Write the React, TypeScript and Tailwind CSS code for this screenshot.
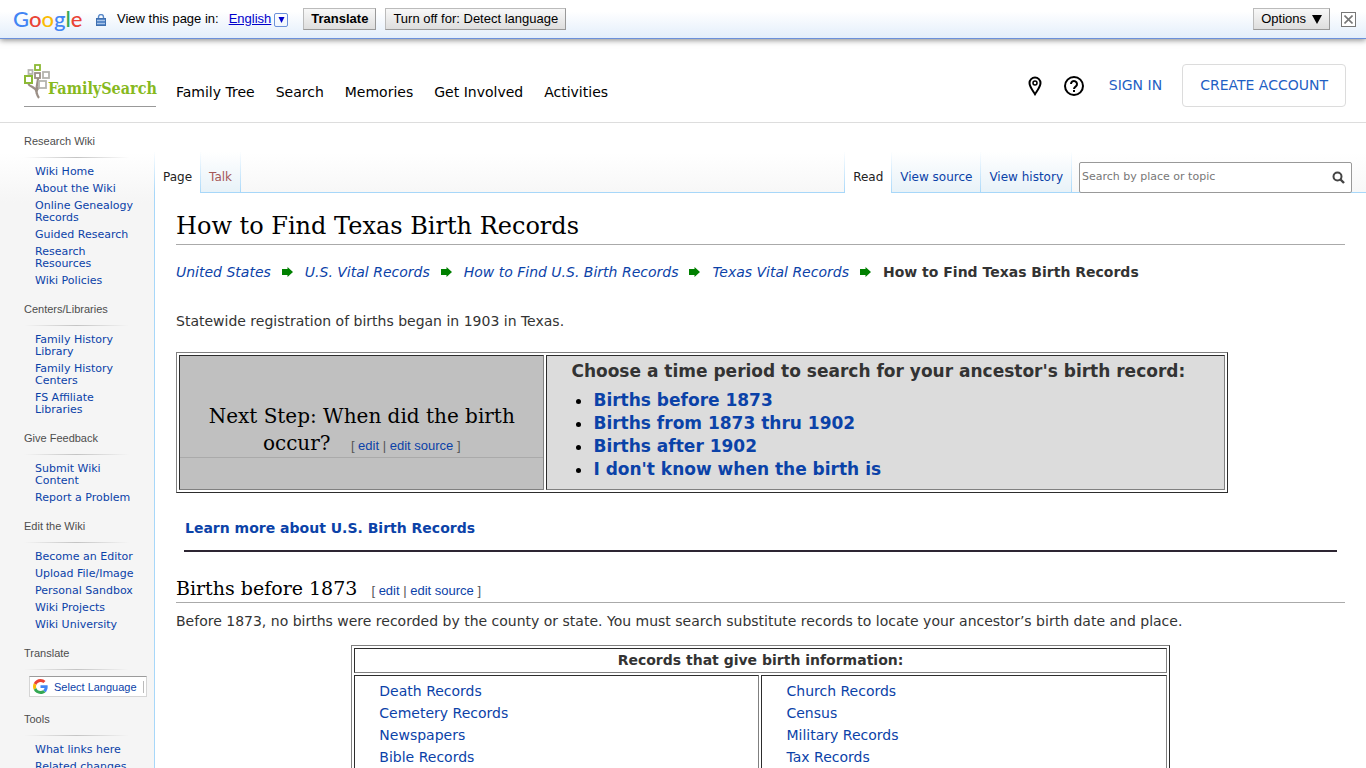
import React, { useState } from "react"

const linkColor = "text-[#0b42a8]"

const sections = [
    {
        title: "Research Wiki",
        links: ["Wiki Home", "About the Wiki", "Online Genealogy Records", "Guided Research", "Research Resources", "Wiki Policies"],
    },
    {
        title: "Centers/Libraries",
        links: ["Family History Library", "Family History Centers", "FS Affiliate Libraries"],
    },
    { title: "Give Feedback", links: ["Submit Wiki Content", "Report a Problem"] },
    {
        title: "Edit the Wiki",
        links: ["Become an Editor", "Upload File/Image", "Personal Sandbox", "Wiki Projects", "Wiki University"],
    },
    { title: "Translate", links: [] },
    { title: "Tools", links: ["What links here", "Related changes"] },
]

function GoogleLogo() {
    return (
        <a href="#" className="w-[68px] font-['Lato'] text-[22px] leading-6 font-medium">
            <span className="text-[#4285f4]">G</span>
            <span className="text-[#ea4335]">o</span>
            <span className="text-[#fbbc05]">o</span>
            <span className="text-[#4285f4]">g</span>
            <span className="text-[#34a853]">l</span>
            <span className="text-[#ea4335]">e</span>
        </a>
    )
}

function TranslateBar() {
    const button = "h-[22px] px-[7px] border border-[#bbb] border-r-[#999] border-b-[#999] bg-linear-to-b from-[#f8f8f8] to-[#dedede] whitespace-nowrap text-black"

    return (
        <div className="relative z-10 flex items-center h-[39px] pl-[13px] pr-[10px] border-b border-[#6b90da] bg-linear-to-b from-white from-30% to-[#e3eefb] shadow-[0_1px_6px_rgba(0,0,0,0.5)] font-['Liberation_Sans',sans-serif] text-[13px] text-black">
            <GoogleLogo />
            <svg className="ml-[15px] mt-px" width="10" height="12" viewBox="0 0 10 12">
                <path d="M2.5 5V3a2.5 2.5 0 0 1 5 0v2" fill="none" stroke="#5b8ac9" strokeWidth="1.4" />
                <rect x="0.5" y="4.5" width="9" height="7" fill="#5b8ac9" stroke="#3f6fae" />
                <path d="M1 6.5h8M1 9.5h8" stroke="#a8c4e8" />
            </svg>
            <span className="ml-[11px]">View this page in:</span>
            <a href="#" className="ml-[10px] underline text-[#0000cc]">English</a>
            <button className="ml-[3px] mt-[2px] flex items-center justify-center size-[14px] rounded-[2px] border border-[#6b90da]" aria-label="Choose language">
                <svg width="7" height="6" viewBox="0 0 7 6"><path d="M0.5 0h6L3.5 6z" fill="#0000cc" /></svg>
            </button>
            <button className={button + " ml-[15px] font-bold"}>Translate</button>
            <button className={button + " ml-[9px]"}>Turn off for: Detect language</button>
            <button className={button + " ml-auto flex items-center gap-[6px]"}>
                Options
                <svg width="10" height="9" viewBox="0 0 10 9"><path d="M0 0h10L5 9z" /></svg>
            </button>
            <button className="ml-[11px] flex items-center justify-center size-[15px] border border-[#777] bg-white" aria-label="Close">
                <svg width="9" height="9" viewBox="0 0 9 9"><path d="M0.5 0.5l8 8M8.5 0.5l-8 8" stroke="#777" strokeWidth="1.6" /></svg>
            </button>
        </div>
    )
}

function FamilySearchLogo() {
    return (
        <a href="#" className="flex items-start w-[132px] h-[43px] border-b border-[#999]">
            <svg className="shrink-0" width="26" height="35" viewBox="0 0 26 35" fill="none">
                <path d="M4.5 20c1 3 7 2.500 8 8 .5 2.500 .8 4 2.500 6M14 14c0 5-2 8-1.500 13M16 23c-3 1.500-4 3.500-3.200 7" stroke="#9b8f86" strokeWidth="2.200" />
                <g strokeWidth="1.8">
                    <rect x="11" y="1" width="5" height="5" stroke="#8cb935" />
                    <rect x="4.500" y="6" width="4" height="4" stroke="#b4b4ae" />
                    <rect x="11" y="9" width="5" height="5" stroke="#9b8f86" />
                    <rect x="19" y="8" width="6" height="6" stroke="#b4b4ae" />
                    <rect x="1" y="12" width="7" height="7" stroke="#8cb935" strokeWidth="2" />
                    <rect x="15" y="17" width="7" height="7" stroke="#b4b4ae" fill="#fff" />
                </g>
            </svg>
            <span className="-ml-[2px] mt-[14px] font-['DejaVu_Serif_Condensed','DejaVu_Serif',serif] text-[16px] leading-[22px] font-bold text-[#87b91e]">
                FamilySearch
            </span>
        </a>
    )
}

function SiteHeader() {
    const items = ["Family Tree", "Search", "Memories", "Get Involved", "Activities"]

    return (
        <header className="flex items-center pt-[25px] pb-[15px] pl-6 pr-5 border-b border-[#ddd] bg-white">
            <FamilySearchLogo />
            <nav className="ml-5 pt-3">
                <ul className="flex gap-[21px] text-[14px] leading-5 text-black">
                    {items.map((item) => (
                        <li key={item}><a href="#">{item}</a></li>
                    ))}
                </ul>
            </nav>
            <div className="ml-auto flex items-center text-[14px] text-[#1f5fc4]">
                <a href="#" aria-label="Find a center">
                    <svg width="14" height="20" viewBox="0 0 14 20" fill="none" stroke="#000" strokeWidth="2">
                        <path d="M7 18.200C4 13.500 1.500 10.500 1.500 7a5.500 5.500 0 0 1 11 0c0 3.500-2.500 6.500-5.500 11.200z" />
                        <circle cx="7" cy="7" r="2" strokeWidth="1.500" />
                    </svg>
                </a>
                <a href="#" className="ml-[21px]" aria-label="Help">
                    <svg width="22" height="22" viewBox="0 0 22 22" fill="none" stroke="#000" strokeWidth="2">
                        <circle cx="11" cy="11" r="9" />
                        <path d="M8 9a3 3 0 1 1 4.800 2.400C11.500 12.300 11 12.700 11 14" />
                        <path d="M11 15v2" />
                    </svg>
                </a>
                <a href="#" className="ml-6">SIGN IN</a>
                <button className="ml-5 h-[43px] px-[17px] rounded-[4px] border border-[#dcdcdc]">CREATE ACCOUNT</button>
            </div>
        </header>
    )
}

function LanguagePicker() {
    return (
        <a href="#" className={"flex items-center w-[118px] h-[21px] ml-[5px] mb-[15px] pl-[3px] border border-[#d5d5d5] border-t-[#9b9b9b] bg-white whitespace-nowrap " + linkColor}>
            <svg className="shrink-0" width="15" height="15" viewBox="0 0 48 48">
                <path fill="#EA4335" d="M24 9.500c3.540 0 6.710 1.220 9.210 3.600l6.850-6.850C35.900 2.380 30.470 0 24 0 14.620 0 6.510 5.380 2.560 13.220l7.980 6.190C12.430 13.720 17.740 9.500 24 9.500z" />
                <path fill="#4285F4" d="M46.980 24.550c0-1.570-.15-3.090-.38-4.550H24v9.020h12.940c-.58 2.960-2.260 5.480-4.780 7.180l7.730 6c4.510-4.180 7.090-10.360 7.090-17.650z" />
                <path fill="#FBBC05" d="M10.530 28.590c-.48-1.450-.76-2.990-.76-4.590s.27-3.140.76-4.590l-7.980-6.190C.92 16.460 0 20.120 0 24c0 3.880.92 7.540 2.560 10.780l7.970-6.190z" />
                <path fill="#34A853" d="M24 48c6.480 0 11.930-2.130 15.890-5.810l-7.730-6c-2.150 1.450-4.920 2.300-8.160 2.300-6.260 0-11.570-4.220-13.470-9.910l-7.980 6.190C6.510 42.620 14.620 48 24 48z" />
            </svg>
            <span className="ml-[6px] font-['Liberation_Sans',sans-serif]">Select Language</span>
            <span className="ml-[6px] h-3 border-l border-[#bbb]"></span>
        </a>
    )
}

function Sidebar() {
    return (
        <aside className="w-[154px] shrink-0 pl-6 pt-[11px] text-[11px] leading-3">
            {sections.map((section) => (
                <section key={section.title} className="mb-[10px]">
                    <h3 className="h-[23px] pt-px font-['Liberation_Sans',sans-serif] text-[#4d4d4d]">{section.title}</h3>
                    <div className="h-px w-[105px] mb-[6px] bg-linear-to-r from-transparent via-[#c4c4c4] to-transparent"></div>
                    {section.title === "Translate" ? (
                        <LanguagePicker />
                    ) : (
                        <ul className={"w-[110px] pt-[2px] pl-[11px] " + linkColor}>
                            {section.links.map((link) => (
                                <li key={link} className="pb-[5px]"><a href="#">{link}</a></li>
                            ))}
                        </ul>
                    )}
                </section>
            ))}
        </aside>
    )
}

function Tab({ label, active, color }: { label: string; active?: boolean; color?: string }) {
    return (
        <li className={"flex border-r [border-image:linear-gradient(to_bottom,#fff,#a7d7f9)_1] " + (active ? "-mb-px bg-white" : "bg-linear-to-b from-white to-[#e8f2f8]")}>
            <a href="#" className={"px-2 pt-4 leading-[18px] whitespace-nowrap " + (color ?? linkColor)}>{label}</a>
        </li>
    )
}

function TabBar() {
    const [query, setQuery] = useState("")

    return (
        <div className="flex items-end h-[70px] border-b border-[#a7d7f9] text-[12px]">
            <ul className="flex h-[40px] items-stretch border-l [border-image:linear-gradient(to_bottom,#fff,#a7d7f9)_1]">
                <Tab label="Page" active color="text-[#222]" />
                <Tab label="Talk" color="text-[#a55858]" />
            </ul>
            <ul className="ml-auto flex h-[40px] items-stretch border-l [border-image:linear-gradient(to_bottom,#fff,#a7d7f9)_1]">
                <Tab label="Read" active color="text-[#222]" />
                <Tab label="View source" />
                <Tab label="View history" />
            </ul>
            <form className="flex items-center w-[20%] min-w-[273px] h-[31px] ml-[7px] mr-[14px] -mb-px pl-[2px] pr-[6px] rounded-[2px] border border-[#999] bg-white">
                <input
                    className="grow min-w-0 pb-px text-[11px] outline-none placeholder:text-[#777]"
                    type="text"
                    aria-label="Search"
                    placeholder="Search by place or topic"
                    value={query}
                    onChange={(e) => setQuery(e.target.value)}
                />
                <button type="button" aria-label="Go">
                    <svg width="13" height="13" viewBox="0 0 13 13" fill="none" stroke="#444" strokeWidth="2">
                        <circle cx="5.500" cy="5.500" r="4" />
                        <path d="M8.500 8.500l3.500 3.500" strokeWidth="2.400" />
                    </svg>
                </button>
            </form>
        </div>
    )
}

function EditLinks() {
    return (
        <span className="ml-[14px] font-['Liberation_Sans',sans-serif] text-[13px] leading-5 text-[#555] whitespace-nowrap">
            [ <a href="#" className={linkColor}>edit</a> | <a href="#" className={linkColor}>edit source</a> ]
        </span>
    )
}

function Breadcrumbs() {
    const crumbs = ["United States", "U.S. Vital Records", "How to Find U.S. Birth Records", "Texas Vital Records"]

    return (
        <p className="mt-4 flex flex-wrap items-center leading-[22px]">
            {crumbs.map((crumb) => (
                <React.Fragment key={crumb}>
                    <a href="#" className={"italic " + linkColor}>{crumb}</a>
                    <svg className="ml-[11px] mr-3" width="11" height="10" viewBox="0 0 11 10">
                        <path d="M0 2h5.500V0L11 5l-5.500 5V8H0z" fill="#008000" />
                    </svg>
                </React.Fragment>
            ))}
            <b>How to Find Texas Birth Records</b>
        </p>
    )
}

const tableBorder = "border border-[#808080] border-r-[#2d2d2d] border-b-[#2d2d2d] border-separate border-spacing-[2px]"
const cellBorder = "border border-[#2d2d2d] border-r-[#808080] border-b-[#808080]"
const heading = "font-['DejaVu_Serif',serif] font-normal text-black"

function PeriodTable() {
    const periods = ["Births before 1873", "Births from 1873 thru 1902", "Births after 1902", "I don't know when the birth is"]

    return (
        <table className={"mt-5 w-[90%] table-fixed " + tableBorder}>
            <tbody>
                <tr>
                    <td className={"w-[35%] bg-[#c0c0c0] align-middle text-center " + cellBorder}>
                        <h2 className={"mt-4 border-b border-[#aaa] text-[20px] leading-[27px] " + heading}>
                            Next Step: When did the birth
                            <br />
                            occur? <EditLinks />
                        </h2>
                    </td>
                    <td className={"h-[135px] pl-6 pt-[3px] pb-1 bg-[#dcdcdc] align-top text-[17px] font-bold " + cellBorder}>
                        <p className="leading-6">Choose a time period to search for your ancestor's birth record:</p>
                        <ul className="mt-[6px] pl-[22px] list-disc leading-[23px] marker:text-black">
                            {periods.map((period) => (
                                <li key={period}><a href="#" className={linkColor}>{period}</a></li>
                            ))}
                        </ul>
                    </td>
                </tr>
            </tbody>
        </table>
    )
}

function RecordsTable() {
    const columns = [
        ["Death Records", "Cemetery Records", "Newspapers", "Bible Records"],
        ["Church Records", "Census", "Military Records", "Tax Records"],
    ]

    return (
        <table className={"mt-[13px] mx-auto w-[70%] table-fixed " + tableBorder}>
            <thead>
                <tr>
                    <th colSpan={2} className={"leading-[23px] " + cellBorder}>Records that give birth information:</th>
                </tr>
            </thead>
            <tbody>
                <tr>
                    {columns.map((records) => (
                        <td key={records[0]} className={"pl-6 pt-1 pb-2 align-top " + cellBorder}>
                            <ul className={"leading-[22px] " + linkColor}>
                                {records.map((record) => (
                                    <li key={record}><a href="#">{record}</a></li>
                                ))}
                            </ul>
                        </td>
                    ))}
                </tr>
            </tbody>
        </table>
    )
}

function App() {
    return (
        <div className="font-['DejaVu_Sans',sans-serif] text-[#333]">
            <TranslateBar />
            <SiteHeader />
            <div className="flex bg-[linear-gradient(to_bottom,#fff_30px,#f5f5f5_80px)]">
                <Sidebar />
                <div className="flex flex-col grow min-w-0">
                    <TabBar />
                    <main className="grow px-[21px] pt-[15px] border-l border-[#a7d7f9] bg-white text-[14px]">
                        <h1 className={"border-b border-[#aaa] text-[24px] leading-9 " + heading}>How to Find Texas Birth Records</h1>
                        <Breadcrumbs />
                        <p className="mt-[27px] leading-[22px]">Statewide registration of births began in 1903 in Texas.</p>
                        <PeriodTable />
                        <p className="mt-6 mx-[9px] leading-[22px]">
                            <a href="#" className={"font-bold " + linkColor}>Learn more about U.S. Birth Records</a>
                        </p>
                        <hr className="mt-[11px] mx-2 border-t-2 border-[#2d2532]" />
                        <h2 className={"mt-[22px] border-b border-[#aaa] text-[19px] leading-7 " + heading}>
                            Births before 1873<EditLinks />
                        </h2>
                        <p className="mt-[7px] leading-[22px]">
                            Before 1873, no births were recorded by the county or state. You must search substitute records to locate your ancestor’s birth date and place.
                        </p>
                        <RecordsTable />
                    </main>
                </div>
            </div>
        </div>
    )
}

export default App
